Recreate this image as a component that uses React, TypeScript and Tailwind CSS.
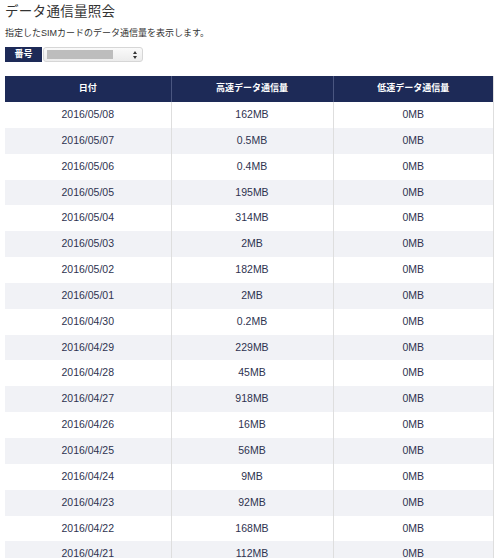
import React from "react";

const rows: [string, string, string][] = [
  ["2016/05/08", "162MB", "0MB"],
  ["2016/05/07", "0.5MB", "0MB"],
  ["2016/05/06", "0.4MB", "0MB"],
  ["2016/05/05", "195MB", "0MB"],
  ["2016/05/04", "314MB", "0MB"],
  ["2016/05/03", "2MB", "0MB"],
  ["2016/05/02", "182MB", "0MB"],
  ["2016/05/01", "2MB", "0MB"],
  ["2016/04/30", "0.2MB", "0MB"],
  ["2016/04/29", "229MB", "0MB"],
  ["2016/04/28", "45MB", "0MB"],
  ["2016/04/27", "918MB", "0MB"],
  ["2016/04/26", "16MB", "0MB"],
  ["2016/04/25", "56MB", "0MB"],
  ["2016/04/24", "9MB", "0MB"],
  ["2016/04/23", "92MB", "0MB"],
  ["2016/04/22", "168MB", "0MB"],
  ["2016/04/21", "112MB", "0MB"],
];

const font = { fontFamily: '"Liberation Sans", "Noto Sans CJK JP", sans-serif' };

export default function App() {
  return (
    <div className="h-[558px] w-[500px] overflow-hidden bg-white pl-[5px] text-[#333]" style={font}>
      <h1 className="pt-[2px] text-[13.5px] leading-[20px] tracking-[0.3px] text-[#333]">データ通信量照会</h1>
      <p className="mt-[4px] text-[9px] leading-[14px] text-[#333]">指定したSIMカードのデータ通信量を表示します。</p>

      <div className="mt-[7px] flex h-[15px] items-stretch">
        <div className="flex w-[37px] items-center justify-center bg-[#1d2a57] text-[9px] font-bold text-white">
          番号
        </div>
        <div className="ml-[1px] flex w-[100px] items-center rounded-[3px] border border-[#d6d6d6] bg-gradient-to-b from-[#fafafa] to-[#ececec] pl-[3px] pr-[5px]">
          <div className="h-[9px] w-[66px] bg-[#bdbdbd]" />
          <svg className="ml-auto" width="4" height="8" viewBox="0 0 4 8">
            <path d="M0 3L2 0L4 3Z M0 5L2 8L4 5Z" fill="#333" />
          </svg>
        </div>
      </div>

      <table className="mt-[14px] w-[489px] table-fixed border-collapse border-r border-[#dedede] text-center">
        <thead>
          <tr className="h-[26px] bg-[#1d2a57] text-[9px] font-bold text-white">
            <th className="w-[166px] border-r border-[#4a5680] font-bold">日付</th>
            <th className="w-[162px] border-r border-[#4a5680] font-bold">高速データ通信量</th>
            <th className="font-bold">低速データ通信量</th>
          </tr>
        </thead>
        <tbody>
          {rows.map(([d, hi, lo], i) => (
            <tr
              key={d}
              className={`h-[25.85px] text-[10.5px] text-[#2e3350] ${i % 2 === 1 ? "bg-[#f1f2f6]" : "bg-white"}`}
            >
              <td className="border-r border-[#dedede]">{d}</td>
              <td className="border-r border-[#dedede]">{hi}</td>
              <td>{lo}</td>
            </tr>
          ))}
        </tbody>
      </table>
    </div>
  );
}
